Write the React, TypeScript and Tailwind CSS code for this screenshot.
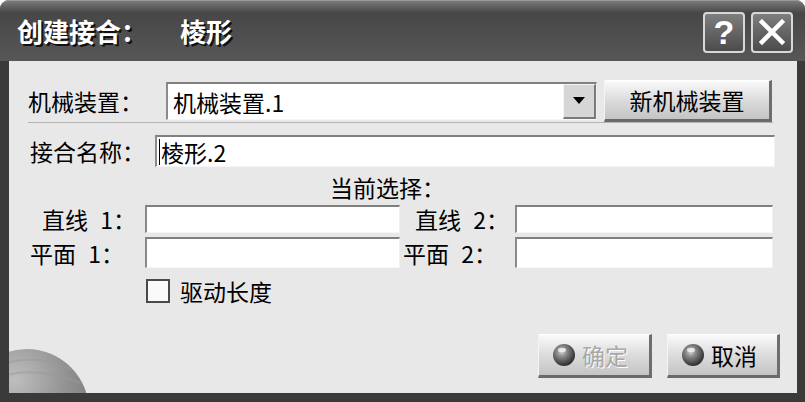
import React from "react";

const cjk = { fontFamily: '"Noto Sans CJK SC", "Noto Sans", sans-serif' };

function Sunken({ className = "", children }: { className?: string; children?: React.ReactNode }) {
  return (
    <div
      className={
        "bg-white border-t-2 border-l-2 border-b border-r border-t-[#808080] border-l-[#8a8a8a] border-b-[#f6f6f6] border-r-[#f0f0f0] flex items-center " +
        className
      }
    >
      {children}
    </div>
  );
}

function Sphere() {
  return (
    <svg width="24" height="24" viewBox="0 0 24 24">
      <defs>
        <radialGradient id="sph" cx="40%" cy="35%" r="65%">
          <stop offset="0%" stopColor="#d8d8d8" />
          <stop offset="35%" stopColor="#8a8a8a" />
          <stop offset="100%" stopColor="#2e2e2e" />
        </radialGradient>
      </defs>
      <circle cx="12" cy="12" r="11" fill="url(#sph)" />
      <ellipse cx="10" cy="7" rx="4" ry="2.2" fill="#f4f4f4" opacity="0.8" />
    </svg>
  );
}

function RaisedButton({ className = "", children }: { className?: string; children?: React.ReactNode }) {
  return (
    <div
      className={
        "flex items-center bg-gradient-to-b from-[#fafafa] via-[#dcdcdc] to-[#c4c4c4] border-t border-l border-t-[#ffffff] border-l-[#f4f4f4] border-r-[3px] border-b-[3px] border-r-[#6e6e6e] border-b-[#6a6a6a] " +
        className
      }
    >
      {children}
    </div>
  );
}

export default function App() {
  return (
    <div className="w-[805px] h-[402px] bg-white overflow-hidden" style={cjk}>
      <div className="w-full h-full rounded-t-[9px] bg-[#3a3a3a] flex flex-col pl-[9px] pr-[8px] pb-[9px]">
        {/* Title bar */}
        <div className="h-[61px] -ml-[9px] -mr-[8px] rounded-t-[9px] bg-gradient-to-b from-[#7a7a7a] via-[#474747] via-20% to-[#575757] border-t border-t-[#9a9a9a] flex items-center pl-[17px] pr-[12px]">
          <span className="text-white font-bold text-[26px] leading-none [text-shadow:2px_2px_0_#111]">创建接合：</span>
          <span className="text-white font-bold text-[26px] leading-none ml-[33px] [text-shadow:2px_2px_0_#111]">棱形</span>
          <div className="ml-auto flex gap-[6px] pt-[2px]">
            <div className="w-[42px] h-[41px] rounded-[4px] border-2 border-[#d8d8d8] bg-gradient-to-b from-[#7e7e7e] to-[#4c4c4c] flex items-center justify-center">
              <span className="text-white text-[34px] font-bold leading-none" style={{ fontFamily: '"Liberation Sans", Arial, sans-serif' }}>?</span>
            </div>
            <div className="w-[42px] h-[41px] rounded-[4px] border-2 border-[#d8d8d8] bg-gradient-to-b from-[#7e7e7e] to-[#4c4c4c] flex items-center justify-center">
              <svg width="26" height="26" viewBox="0 0 26 26">
                <path d="M3 3 L23 23 M23 3 L3 23" stroke="#ffffff" strokeWidth="4.5" strokeLinecap="square" />
              </svg>
            </div>
          </div>
        </div>

        {/* Body */}
        <div className="relative flex-1 bg-[#e8e8e8] flex flex-col text-[23px] text-black leading-[26px] overflow-hidden">
          {/* globe decoration */}
          <svg className="absolute left-0 bottom-0" width="130" height="90" viewBox="0 0 130 90">
            <defs>
              <radialGradient id="halo" cx="20%" cy="100%" r="80%">
                <stop offset="0%" stopColor="#b0b0b0" stopOpacity="0.8" />
                <stop offset="55%" stopColor="#d0d0d0" stopOpacity="0.45" />
                <stop offset="100%" stopColor="#e8e8e8" stopOpacity="0" />
              </radialGradient>
              <radialGradient id="globe" cx="40%" cy="25%" r="80%">
                <stop offset="0%" stopColor="#b4b4b4" />
                <stop offset="55%" stopColor="#7a7a7a" />
                <stop offset="100%" stopColor="#555555" />
              </radialGradient>
            </defs>
            <ellipse cx="25" cy="95" rx="105" ry="75" fill="url(#halo)" />
            <circle cx="18" cy="108" r="62" fill="url(#globe)" opacity="0.8" />
            <path d="M-10 62 Q25 50 62 66 M-10 74 Q28 62 72 80" stroke="#9a9a9a" strokeWidth="2" fill="none" opacity="0.5" />
          </svg>

          {/* Row 1 */}
          <div className="relative mt-[19px] h-[42px] flex items-center">
            <span className="ml-[19px] w-[138px]">机械装置：</span>
            <Sunken className="w-[431px] h-[38px] pl-[5px]">
              <span className="flex-1">机械装置.1</span>
              <div className="w-[33px] h-full bg-[#d6d6d6] border-t border-l border-t-[#f4f4f4] border-l-[#f4f4f4] border-r-2 border-b-2 border-r-[#7a7a7a] border-b-[#7a7a7a] flex items-center justify-center">
                <svg width="12" height="8" viewBox="0 0 12 8">
                  <path d="M0 0 L12 0 L6 7 Z" fill="#000" />
                </svg>
              </div>
            </Sunken>
            <RaisedButton className="ml-[7px] w-[168px] h-[42px] justify-center">
              <span>新机械装置</span>
            </RaisedButton>
          </div>
          <div className="relative h-px ml-[19px] mr-[24px] bg-[#b4b4b4]" />

          {/* Row 2 */}
          <div className="relative mt-[12px] flex items-center">
            <span className="ml-[21px] w-[125px]">接合名称：</span>
            <Sunken className="w-[620px] h-[32px] pl-[2px]">
              <span className="border-l border-black pl-[1px]">棱形.2</span>
            </Sunken>
          </div>

          <div className="relative mt-[7px] h-[26px] pl-[321px]">当前选择：</div>

          {/* Row 直线 */}
          <div className="relative mt-[5px] flex items-center">
            <span className="w-[136px] pl-[33px] [word-spacing:7px]">直线 1：</span>
            <Sunken className="w-[255px] h-[28px]" />
            <span className="w-[115px] pl-[15px] [word-spacing:7px]">直线 2：</span>
            <Sunken className="w-[258px] h-[28px]" />
          </div>

          {/* Row 平面 */}
          <div className="relative mt-[4px] flex items-center">
            <span className="w-[136px] pl-[21px] [word-spacing:7px]">平面 1：</span>
            <Sunken className="w-[255px] h-[31px]" />
            <span className="w-[115px] pl-[3px] [word-spacing:7px]">平面 2：</span>
            <Sunken className="w-[258px] h-[31px]" />
          </div>

          {/* Checkbox */}
          <div className="relative mt-[10px] flex items-center pl-[137px]">
            <div className="w-[24px] h-[24px] border-2 border-[#4a4a4a] bg-[#fafafa]" />
            <span className="ml-[10px]">驱动长度</span>
          </div>

          {/* Buttons */}
          <div className="relative mt-[30px] flex justify-end gap-[15px] pr-[17px]">
            <RaisedButton className="w-[114px] h-[44px] pl-[13px] gap-[6px]">
              <Sphere />
              <span className="text-[#a8a8a8] [text-shadow:1px_1px_0_#ffffff]">确定</span>
            </RaisedButton>
            <RaisedButton className="w-[113px] h-[44px] pl-[13px] gap-[6px]">
              <Sphere />
              <span>取消</span>
            </RaisedButton>
          </div>
        </div>
      </div>
    </div>
  );
}
